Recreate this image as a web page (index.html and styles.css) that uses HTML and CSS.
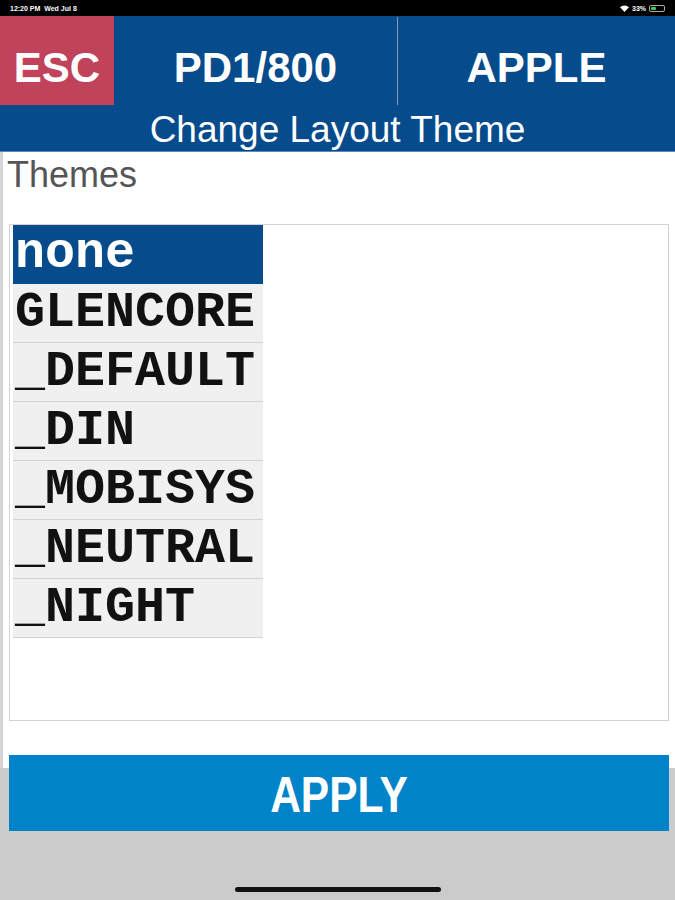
FILE: index.html
```html
<!DOCTYPE html>
<html lang="en">
<head>
<meta charset="utf-8">
<title>Change Layout Theme</title>
<link rel="stylesheet" href="styles.css">
</head>
<body>
<div class="screen">
  <div class="status">
    <span class="status-left">12:20 PM&nbsp;&nbsp;Wed Jul 8</span>
    <span class="status-right">
      <svg class="wifi" width="9" height="7" viewBox="0 0 9 7"><path d="M4.5 7 L0 2.2 A6.5 6.5 0 0 1 9 2.2 Z" fill="#fff"/></svg>
      <span class="pct">33%</span>
      <span class="battery"><span class="battery-fill"></span></span>
    </span>
  </div>
  <header class="header">
    <div class="toprow">
      <div class="esc">ESC</div>
      <div class="cell cell-first">PD1/800</div>
      <div class="divider"></div>
      <div class="cell">APPLE</div>
    </div>
    <div class="subtitle">Change Layout Theme</div>
  </header>
  <main class="panel">
    <div class="label">Themes</div>
    <div class="listbox">
      <div class="item selected">none</div>
      <div class="item">GLENCORE</div>
      <div class="item">_DEFAULT</div>
      <div class="item">_DIN</div>
      <div class="item">_MOBISYS</div>
      <div class="item">_NEUTRAL</div>
      <div class="item">_NIGHT</div>
    </div>
  </main>
  <div class="footer">
    <button class="apply"><span class="apply-text">APPLY</span></button>
    <div class="home-bar"></div>
  </div>
</div>
</body>
</html>
```
FILE: styles.css
```css
* { box-sizing: border-box; }
html, body { margin: 0; padding: 0; }
body {
  width: 675px;
  height: 900px;
  background: #cbcbcb;
  font-family: "Liberation Sans", Arial, sans-serif;
  overflow: hidden;
}
.screen { display: flex; flex-direction: column; height: 900px; }

.status {
  height: 16px;
  background: #000;
  color: #fff;
  display: flex;
  align-items: center;
  justify-content: space-between;
  padding: 0 10px 0 10px;
  font-size: 7px;
  font-weight: bold;
}
.status-right { display: flex; align-items: center; gap: 3px; }
.battery {
  width: 16px; height: 7px;
  border: 1px solid #aaa;
  border-radius: 2px;
  padding: 1px;
  display: flex;
}
.battery-fill { width: 5px; background: #3ccf4e; border-radius: 1px; }

.header { background: #064b8b; color: #fff; }
.toprow { display: flex; height: 89px; }
.esc, .cell {
  display: flex;
  align-items: center;
  justify-content: center;
  padding-top: 14px;
  font-size: 42px;
  font-weight: bold;
}
.esc { width: 114px; background: #c1425b; }
.cell { flex: 1; }
.cell-first { flex: 0 0 283px; }
.divider { width: 1px; margin: 1px 0 0; background: #8a9cb3; }
.subtitle {
  height: 47px;
  padding-top: 2px;
  line-height: 46px;
  text-align: center;
  font-size: 37px;
  border-bottom: 1px solid #5f86b8;
}

.panel {
  height: 616px;
  background: #fff;
  border-left: 3px solid #d6d6d6;
  padding-top: 2px;
}
.label {
  font-size: 36px;
  line-height: 41px;
  color: #555;
  padding-left: 4px;
}
.listbox {
  margin: 29px 6px 0 6px;
  height: 497px;
  border: 1px solid #d3d3d3;
  padding: 0 3px;
}
.item {
  width: 250px;
  height: 59px;
  line-height: 58px;
  padding-left: 2px;
  background: #f0f0f0;
  border-bottom: 1px solid #d2d2d2;
  font-family: "Liberation Mono", "Courier New", monospace;
  font-weight: bold;
  font-size: 50px;
  color: #111;
  white-space: nowrap;
  overflow: visible;
}
.item.selected { background: #064b8b; color: #fff; border-bottom-color: #064b8b; }

.footer { flex: 1; display: flex; flex-direction: column; align-items: center; }
.apply {
  align-self: flex-start;
  margin: -13px 0 0 9px;
  width: 660px;
  height: 76px;
  border: none;
  background: #0083c8;
  color: #fff;
  font-family: "Liberation Sans", Arial, sans-serif;
  font-weight: bold;
  font-size: 50px;
  padding: 0;
  display: flex;
  align-items: center;
  justify-content: center;
}
.apply-text { display: inline-block; transform: scaleX(0.85); padding-top: 4px; }
.home-bar {
  margin-top: 56px;
  width: 206px;
  height: 5px;
  border-radius: 3px;
  background: #111;
}
```
